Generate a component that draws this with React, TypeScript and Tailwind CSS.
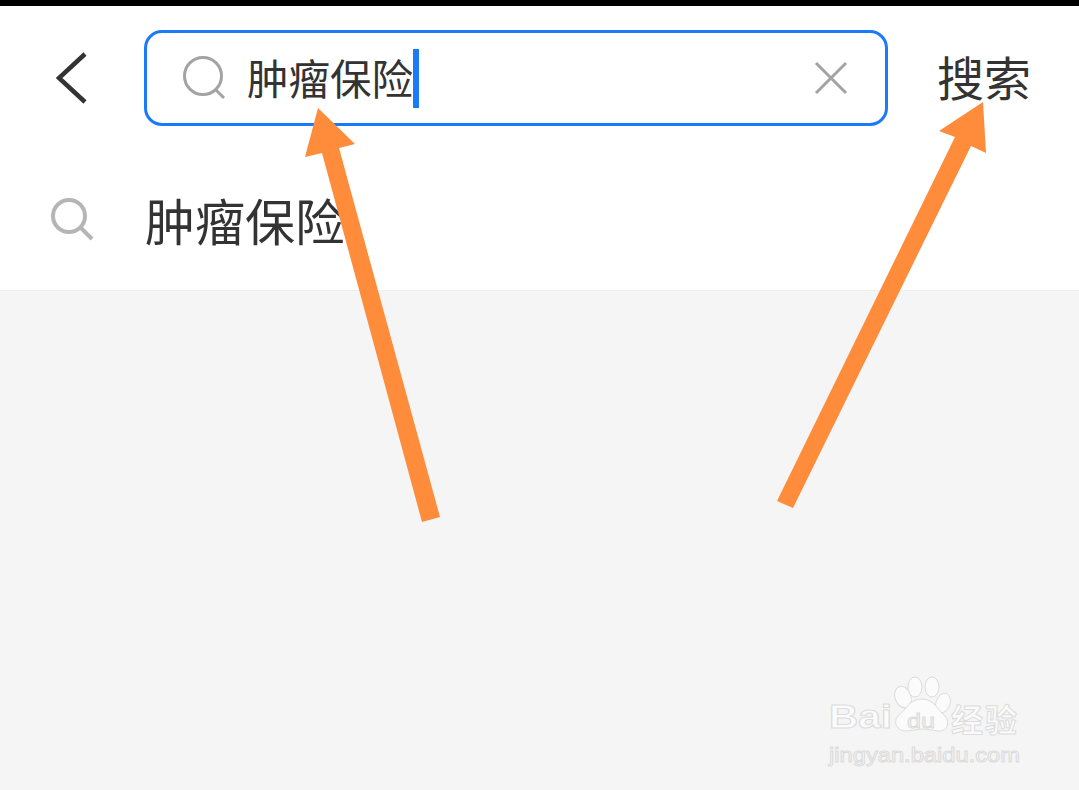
const CJK = 'font-["Noto_Sans_CJK_SC","Noto_Sans",sans-serif]';

function Arrows() {
  return (
    <svg className="absolute left-0 top-0" width="1079" height="790" viewBox="0 0 1079 790">
      <polygon
        points="318,108 355,144 339,148 440,517 422,522 322,153 305,157"
        fill="#ff8c3b"
      />
      <polygon
        points="983,102 986,153 971,146 793,508 777,501 955,137 939,131"
        fill="#ff8c3b"
      />
    </svg>
  );
}

function Watermark() {
  const outline = { stroke: '#dcdcdc', strokeWidth: 1, fill: '#fbfbfb' };
  return (
    <svg className="absolute left-[810px] top-[660px]" width="230" height="120" viewBox="0 0 230 120">
      <g {...outline}>
        <ellipse cx="93" cy="37" rx="8" ry="11" transform="rotate(-20 93 37)" />
        <ellipse cx="105" cy="27" rx="7" ry="10" />
        <ellipse cx="122" cy="27" rx="7" ry="10" />
        <ellipse cx="133" cy="43" rx="7" ry="10" transform="rotate(20 133 43)" />
        <path d="M112 39c12 0 16 11 22 16 6 5 5 17-6 16-7-1-11-2-16-2s-10 2-17 2c-10-1-12-11-6-16 7-5 10-16 23-16z" />
      </g>
      <g style={{ fontFamily: '"Liberation Sans", sans-serif' }} {...outline}>
        <text x="19" y="68" fontSize="33" textLength="63" lengthAdjust="spacingAndGlyphs" fontWeight="700">Bai</text>
        <text x="97" y="68" fontSize="21" textLength="28" lengthAdjust="spacingAndGlyphs" fill="#f5f5f5">du</text>
        <text x="19" y="102" fontSize="19.5" textLength="191" lengthAdjust="spacingAndGlyphs">jingyan.baidu.com</text>
      </g>
      <text x="141" y="72" fontSize="32" textLength="66" {...outline} fontWeight="700" style={{ fontFamily: '"Noto Sans CJK SC", sans-serif' }}>经验</text>
    </svg>
  );
}

export default function App() {
  return (
    <div className={`relative flex h-[790px] w-[1079px] flex-col overflow-hidden bg-[#f5f5f5] ${CJK}`}>
      <div className="h-[6px] bg-black" />

      {/* search bar */}
      <div className="flex h-[144px] items-start bg-white pt-[24px]">
        <div className="flex h-[96px] w-[144px] items-center pl-[56px]">
          <svg width="32" height="52" viewBox="0 0 32 52" fill="none" stroke="#333" strokeWidth="4.5">
            <path d="M29 2 3 26l26 24" />
          </svg>
        </div>
        <div className="flex h-[96px] w-[744px] items-center rounded-[18px] border-[3px] border-[#1a7afa] pl-[35px] pr-[37px]">
          <svg width="44" height="44" viewBox="0 0 44 44" fill="none" stroke="#a3a3a3" strokeWidth="3" className="shrink-0">
            <circle cx="21" cy="20" r="18.5" />
            <path d="m33 33 9 9" />
          </svg>
          <span className="mb-[2px] ml-[21px] text-[41.5px] leading-[56px] text-[#333]">肿瘤保险</span>
          <span className="h-[59px] w-[6px] bg-[#1a7afa]" />
          <svg width="34" height="34" viewBox="0 0 34 34" stroke="#a3a3a3" strokeWidth="3" className="ml-auto shrink-0">
            <path d="m2 2 30 30M32 2 2 32" />
          </svg>
        </div>
        <span className="mt-[-2px] ml-[49px] text-[47px] leading-[96px] text-[#333]">搜索</span>
      </div>

      {/* suggestion row */}
      <div className="flex h-[141px] items-start border-b border-[#efefef] bg-white">
        <div className="flex h-[140px] w-[145px] items-start pl-[50px] pt-[47px]">
          <svg width="44" height="44" viewBox="0 0 44 44" fill="none" stroke="#b5b5b5" strokeWidth="4">
            <circle cx="19" cy="19" r="16" />
            <path d="m31 31 11 11" />
          </svg>
        </div>
        <span className="mt-[33px] text-[50px] leading-[72px] text-[#333]">肿瘤保险</span>
      </div>

      <Watermark />
      <Arrows />
    </div>
  );
}
